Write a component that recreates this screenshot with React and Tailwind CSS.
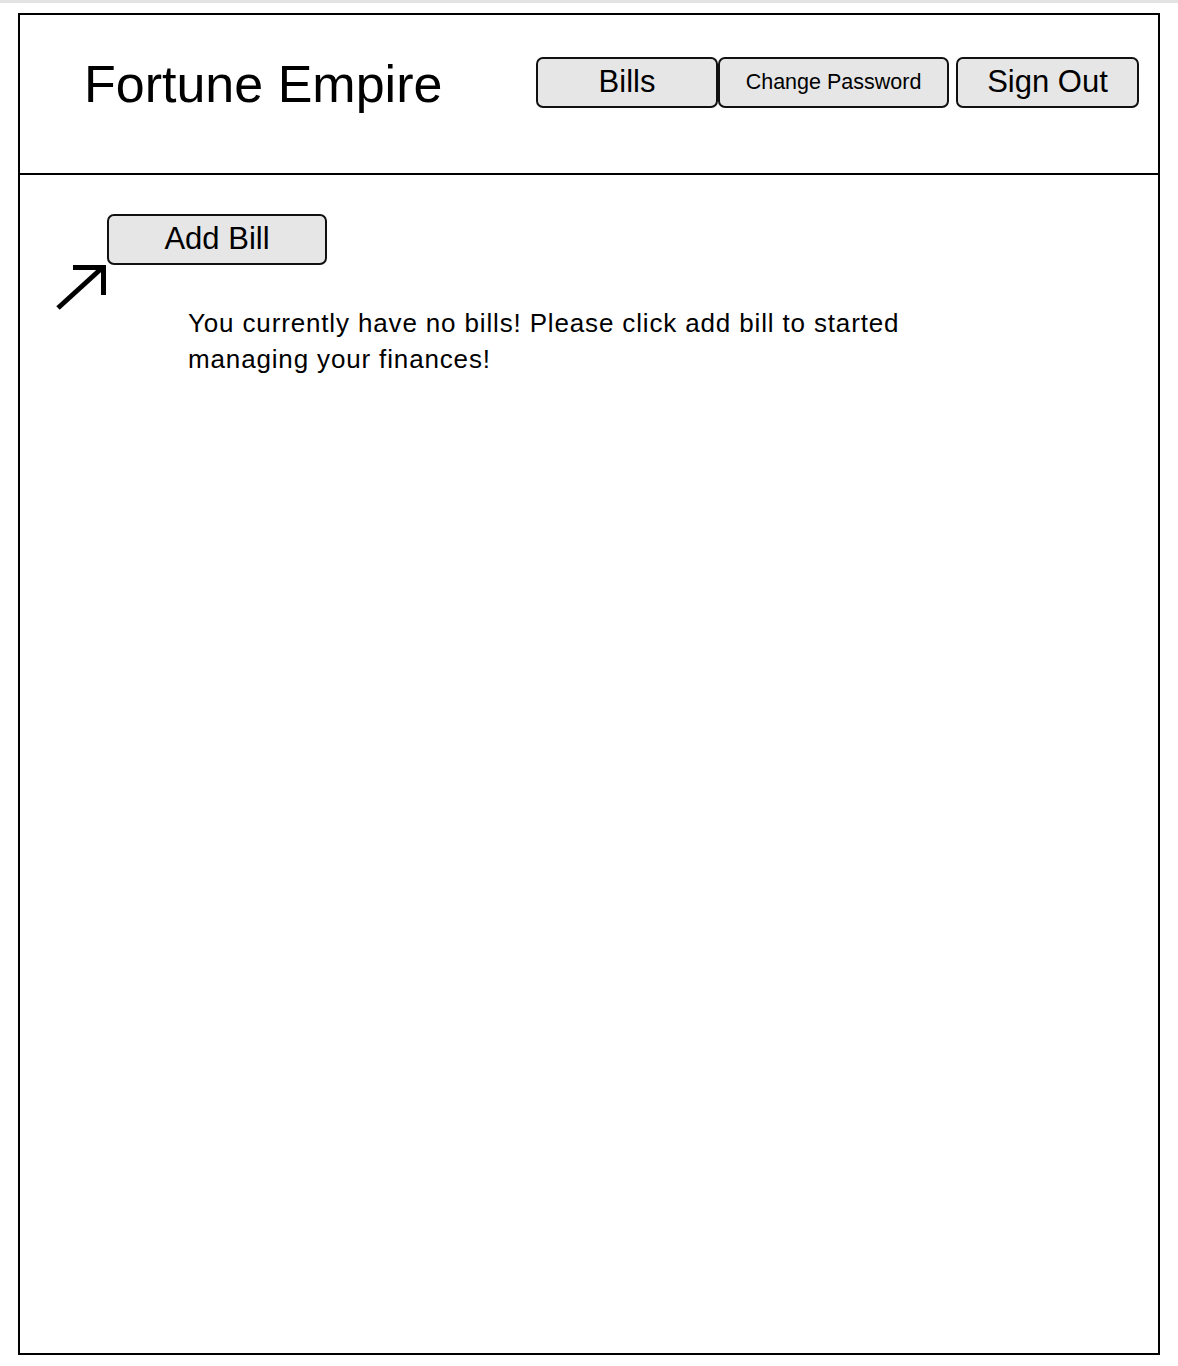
import React from "react";

const font = { fontFamily: '"Liberation Sans", Arial, Helvetica, sans-serif' };

function NavButton({ children, className = "" }) {
    return (
        <button
            type="button"
            className={`h-[51px] flex items-center justify-center rounded-[7px] border-2 border-[#111] bg-[#e6e6e6] text-black leading-none ${className}`}
        >
            {children}
        </button>
    );
}

function Arrow() {
    return (
        <svg
            className="absolute left-[-57px] top-[44px]"
            width="60"
            height="60"
            viewBox="0 0 60 60"
            fill="none"
        >
            <line x1="8" y1="50" x2="52" y2="10" stroke="#000" strokeWidth="5" />
            <polyline points="23,9.5 53.5,9.5 53.5,37" stroke="#000" strokeWidth="5" strokeLinejoin="miter" />
        </svg>
    );
}

export default function App() {
    return (
        <div className="min-h-[1366px] bg-white border-t-[3px] border-[#e3e3e3]" style={font}>
            <div className="ml-[18px] mt-[10px] w-[1142px] h-[1342px] border-2 border-black flex flex-col">
                <header className="h-[160px] border-b-2 border-black flex items-start pt-[42px] pl-[64px] pr-[19px]">
                    <h1 className="text-[52px] leading-none text-black mt-[1px]">Fortune Empire</h1>
                    <div className="ml-auto flex items-start">
                        <NavButton className="w-[182px] text-[31px] pb-[2px]">Bills</NavButton>
                        <NavButton className="w-[231px] text-[21.5px]">Change Password</NavButton>
                        <NavButton className="w-[183px] text-[31px] pb-[2px] ml-[7px]">Sign Out</NavButton>
                    </div>
                </header>

                <main className="flex flex-col items-start pt-[39px] pl-[87px]">
                    <div className="relative">
                        <NavButton className="w-[220px] text-[31px] pb-[2px]">Add Bill</NavButton>
                        <Arrow />
                    </div>
                    <p className="mt-[40px] ml-[81px] w-[750px] text-[26px] leading-[36px] tracking-[0.85px] text-black">
                        You currently have no bills! Please click add bill to started managing your finances!
                    </p>
                </main>
            </div>
        </div>
    );
}
